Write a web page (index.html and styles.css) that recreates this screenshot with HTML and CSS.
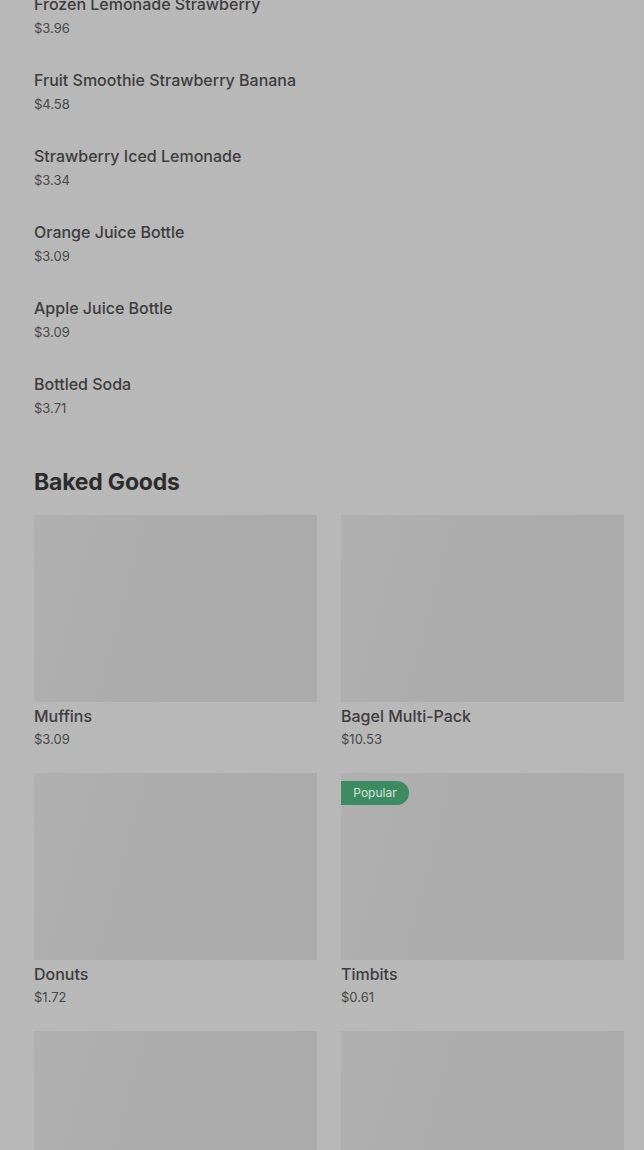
FILE: index.html
```html
<!DOCTYPE html>
<html lang="en">
<head>
    <meta charset="UTF-8">
    <meta name="viewport" content="width=device-width, initial-scale=1.0">
    <title>Menu</title>
    <link rel="stylesheet" href="styles.css">
</head>
<body>
    <div class="page">
        <!-- Drinks list -->
        <ul class="item-list">
            <li class="item">
                <div class="item-name">Frozen Lemonade Strawberry</div>
                <div class="item-price">$3.96</div>
            </li>
            <li class="item">
                <div class="item-name">Fruit Smoothie Strawberry Banana</div>
                <div class="item-price">$4.58</div>
            </li>
            <li class="item">
                <div class="item-name">Strawberry Iced Lemonade</div>
                <div class="item-price">$3.34</div>
            </li>
            <li class="item">
                <div class="item-name">Orange Juice Bottle</div>
                <div class="item-price">$3.09</div>
            </li>
            <li class="item">
                <div class="item-name">Apple Juice Bottle</div>
                <div class="item-price">$3.09</div>
            </li>
            <li class="item">
                <div class="item-name">Bottled Soda</div>
                <div class="item-price">$3.71</div>
            </li>
        </ul>

        <!-- Baked goods -->
        <h2 class="section-title">Baked Goods</h2>
        <div class="card-grid">
            <div class="card">
                <div class="card-image"></div>
                <div class="item-name">Muffins</div>
                <div class="item-price">$3.09</div>
            </div>
            <div class="card">
                <div class="card-image"></div>
                <div class="item-name">Bagel Multi-Pack</div>
                <div class="item-price">$10.53</div>
            </div>
            <div class="card">
                <div class="card-image"></div>
                <div class="item-name">Donuts</div>
                <div class="item-price">$1.72</div>
            </div>
            <div class="card">
                <div class="card-image">
                    <span class="badge">Popular</span>
                </div>
                <div class="item-name">Timbits</div>
                <div class="item-price">$0.61</div>
            </div>
            <div class="card">
                <div class="card-image"></div>
                <div class="item-name">&nbsp;</div>
                <div class="item-price">&nbsp;</div>
            </div>
            <div class="card">
                <div class="card-image"></div>
                <div class="item-name">&nbsp;</div>
                <div class="item-price">&nbsp;</div>
            </div>
        </div>
    </div>
</body>
</html>
```

FILE: styles.css
```css
/* General */
html, body {
    margin: 0;
    padding: 0;
    background-color: #b8b8b8;
    overflow: hidden;
}

body {
    font-family: Inter, Roboto, 'Liberation Sans', sans-serif;
    color: #3a3a3a;
}

.page {
    padding: 0 20px 0 34px;
    margin-top: -6px;
}

/* List items */
.item-list {
    list-style: none;
    margin: 0;
    padding: 0;
}

.item {
    height: 76px;
}

.item-name {
    font-size: 16px;
    font-weight: 500;
    line-height: 20px;
    color: #3d3d3d;
}

.item-price {
    margin-top: 5px;
    font-size: 13px;
    line-height: 18px;
    color: #484848;
}

/* Section */
.section-title {
    margin: 18px 0 19px;
    font-size: 23px;
    font-weight: 700;
    line-height: 28px;
    letter-spacing: -0.2px;
    color: #2c2c2c;
}

.card-grid {
    display: grid;
    grid-template-columns: 283px 283px;
    column-gap: 24px;
    row-gap: 25px;
}

.card .item-name {
    margin-top: 4px;
}

.card .item-price {
    margin-top: 4px;
}

.card-image {
    position: relative;
    height: 187px;
    background: linear-gradient(105deg, #b0b0b0 0%, #acacac 40%, #ababab 100%);
}

.badge {
    position: absolute;
    top: 8px;
    left: 0;
    width: 68px;
    height: 24px;
    line-height: 24px;
    text-align: center;
    font-size: 12px;
    color: #d3e6da;
    background-color: #3e8a62;
    border-radius: 0 12px 12px 0;
}
```
